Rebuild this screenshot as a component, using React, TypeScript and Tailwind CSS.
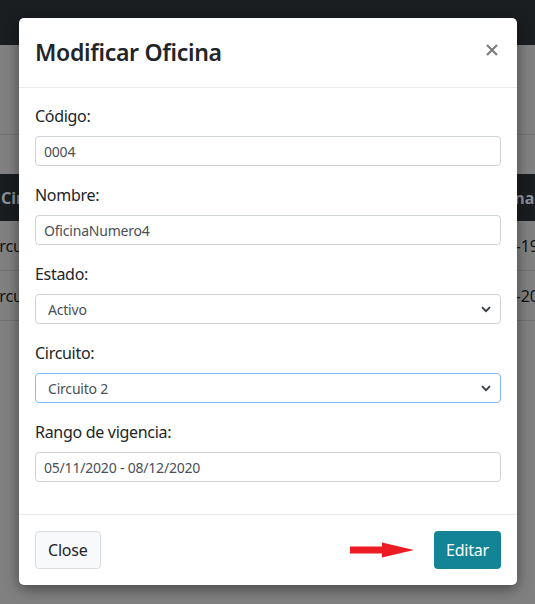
import React from "react";

const font = { fontFamily: '"Noto Sans", "Open Sans", sans-serif' };

function Chevron() {
  return (
    <svg width="10" height="7" viewBox="0 0 10 7" className="shrink-0">
      <path d="M1 1.2 L5 5.2 L9 1.2" fill="none" stroke="#343a40" strokeWidth="1.8" />
    </svg>
  );
}

function Field({ label, value, select, focus, last }: { label: string; value: string; select?: boolean; focus?: boolean; last?: boolean }) {
  return (
    <div className={last ? "" : "mb-[17px]"}>
      <div className="h-6 text-[16px] leading-6 text-[#212529] mb-2 tracking-[-0.3px]">{label}</div>
      <div
        className={`h-[30px] rounded-[4px] border flex items-center justify-between text-[14px] text-[#495057] tracking-[-0.2px] ${
          focus ? "border-[#80bdff]" : "border-[#ced4da]"
        } ${select ? "pl-3 pr-[9px]" : "pl-2"}`}
      >
        <span>{value}</span>
        {select && <Chevron />}
      </div>
    </div>
  );
}

export default function App() {
  return (
    <div className="relative w-full h-[604px] overflow-hidden bg-[#808080]" style={font}>
      {/* dimmed page behind */}
      <div className="h-[45px] bg-[#1b1e21]" />
      <div className="h-[89px]" />
      <div className="h-px bg-[#6f7173]" />
      <div className="h-[39px]" />
      <div className="h-[47px] bg-[#1a1d20] flex items-center justify-between text-[16px] font-bold text-[#8a8f96]">
        <span className="ml-[1px]">Cir</span>
        <span className="mr-[-4px]">nal</span>
      </div>
      <div className="h-[50px] border-b border-[#6f7173] flex items-center justify-between text-[16px] text-[#111213]">
        <span className="ml-[-5px]">ircu</span>
        <span className="mr-[-4px]">-19</span>
      </div>
      <div className="h-[50px] border-b border-[#6f7173] flex items-center justify-between text-[16px] text-[#111213]">
        <span className="ml-[-5px]">ircu</span>
        <span className="mr-[-4px]">-20</span>
      </div>

      {/* modal overlay */}
      <div className="absolute inset-0 pt-[18px] pl-[19px]">
        <div className="w-[498px] bg-white rounded-[5px] shadow-[0_4px_14px_rgba(0,0,0,0.45)]">
          <div className="h-[70px] border-b border-[#e9ecef] flex items-center justify-between pl-4 pr-[19px]">
            <div className="text-[23px] font-semibold text-[#212529] tracking-[-0.3px]">Modificar Oficina</div>
            <svg width="12" height="12" viewBox="0 0 12 12" className="mb-[5px]">
              <path d="M1 1 L11 11 M11 1 L1 11" stroke="#7d7d7d" strokeWidth="2.2" />
            </svg>
          </div>
          <div className="px-4 pt-4 pb-8">
            <Field label="Código:" value="0004" />
            <Field label="Nombre:" value="OficinaNumero4" />
            <Field label="Estado:" value="Activo" select />
            <Field label="Circuito:" value="Circuito 2" select focus />
            <Field label="Rango de vigencia:" value="05/11/2020 - 08/12/2020" last />
          </div>
          <div className="border-t border-[#e9ecef] px-4 pt-4 pb-4 flex items-center justify-between">
            <div className="h-[38px] px-3 rounded-[4px] border border-[#dadde0] bg-[#f8f9fa] text-[16px] text-[#212529] tracking-[-0.2px] flex items-center">
              Close
            </div>
            <div className="flex items-center gap-5">
              <svg width="64" height="16" viewBox="0 0 64 16">
                <path d="M0 4.5 H32 V0.5 L64 8 L32 15.5 V11.5 H0 Z" fill="#ed1c24" />
              </svg>
              <div className="h-[38px] px-3 rounded-[4px] bg-[#138496] text-[16px] text-white tracking-[-0.2px] flex items-center">
                Editar
              </div>
            </div>
          </div>
        </div>
      </div>
    </div>
  );
}
